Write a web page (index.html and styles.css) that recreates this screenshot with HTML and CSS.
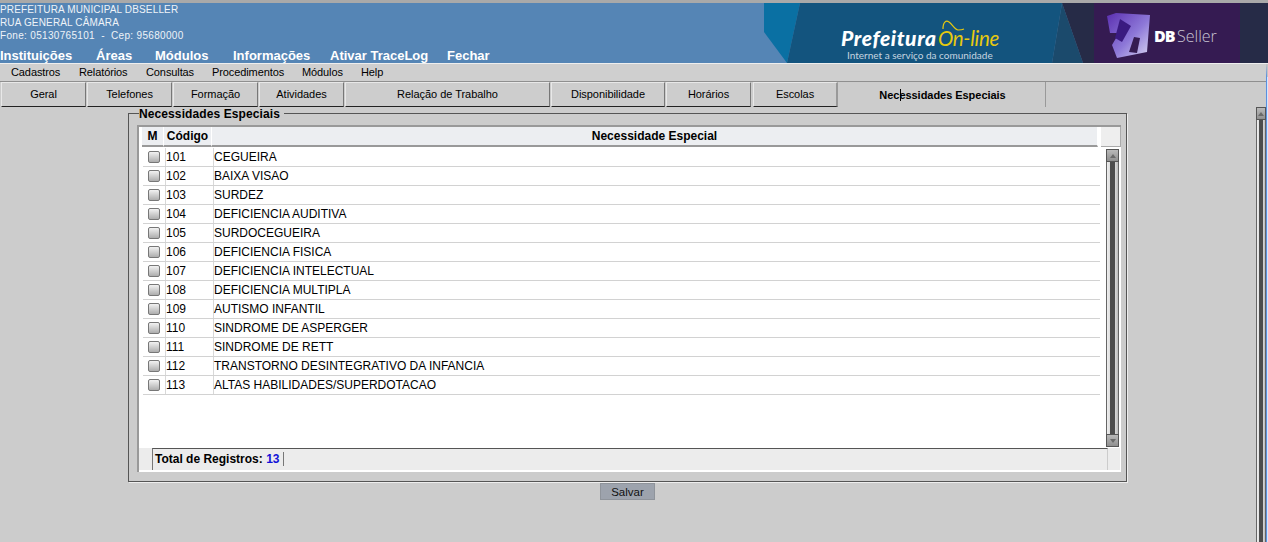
FILE: index.html
```html
<!DOCTYPE html>
<html lang="pt-BR">
<head>
  <meta charset="UTF-8" />
  <title>Necessidades Especiais</title>
  <link rel="stylesheet" href="styles.css">
</head>
<body>
  <header class="topo">
    <div class="topo-info">
      <div class="instituicao">
        <p>PREFEITURA MUNICIPAL DBSELLER</p>
        <p>RUA GENERAL CÂMARA</p>
        <p class="fone">Fone: 05130765101 &nbsp;-&nbsp; Cep: 95680000</p>
      </div>
      <nav class="nav-topo">
        <a class="n-inst">Instituições</a>
        <a class="n-area">Áreas</a>
        <a class="n-mod">Módulos</a>
        <a class="n-info">Informações</a>
        <a class="n-trace">Ativar TraceLog</a>
        <a>Fechar</a>
      </nav>
    </div>
    <svg class="banner" width="504" height="60" viewBox="764 3 504 60">
      <defs>
        <linearGradient id="marca" x1="0" y1="0" x2="1" y2="1">
          <stop offset="0" stop-color="#5b2fb0"/>
          <stop offset="0.55" stop-color="#8d78d8"/>
          <stop offset="1" stop-color="#d9d6f2"/>
        </linearGradient>
      </defs>
      <rect x="764" y="3" width="504" height="60" fill="#5585b5"/>
      <polygon points="764,3 800,3 787,63 764,32" fill="#0a70a3"/>
      <polygon points="800,3 1062,3 1052,63 787,63" fill="#13547e"/>
      <polygon points="1062,3 1083,63 1052,63" fill="#1b4a6c"/>
      <polygon points="1062,3 1268,3 1268,63 1083,63" fill="#262b47"/>
      <rect x="1094" y="3" width="146" height="60" fill="#351b52"/>
      <text x="841" y="46" class="b-pref">Prefeitura</text>
      <text x="938" y="46" class="b-online">On-line</text>
      <path d="M943 29 C943 22 946 20 949 22 C952 24 955 30 958 30 C960 30 962 30 964 29" fill="none" stroke="#e8c90f" stroke-width="1.2"/>
      <text x="847" y="58.5" class="b-sub">Internet a serviço da comunidade</text>
      <polygon points="1107,16 1116,13 1150,15 1147,52 1117,58 1112,45 1119,33 1110,33" fill="url(#marca)"/>
      <polygon points="1120,19 1131,26 1122,42 1115,38" fill="#3a1a80"/>
      <polygon points="1129,52 1134,37 1140,38 1137,53" fill="#351b52"/>
      <text x="1154" y="42" class="b-db">DB</text>
      <text x="1177" y="42" class="b-seller">Seller</text>
    </svg>
  </header>

  <nav class="menu">
    <a class="m-cad">Cadastros</a>
    <a class="m-rel">Relatórios</a>
    <a class="m-con">Consultas</a>
    <a class="m-pro">Procedimentos</a>
    <a class="m-mod">Módulos</a>
    <a>Help</a>
  </nav>

  <div class="abas">
    <a class="aba aba-85">Geral</a>
    <a class="aba aba-85">Telefones</a>
    <a class="aba aba-85">Formação</a>
    <a class="aba aba-85">Atividades</a>
    <a class="aba aba-rel">Relação de Trabalho</a>
    <a class="aba aba-disp">Disponibilidade</a>
    <a class="aba aba-85">Horários</a>
    <a class="aba aba-esc">Escolas</a>
    <a class="aba-ativa"><span class="aba-ativa-txt">Nec<i class="cursor"></i>essidades Especiais</span></a>
  </div>

  <div class="corpo">
    <main class="conteudo">
      <fieldset class="quadro">
        <legend>Necessidades Especiais</legend>
        <div class="grade">
          <div class="grade-head">
            <div class="th th-m">M</div>
            <div class="th th-cod">Código</div>
            <div class="th th-nec">Necessidade Especial</div>
            <div class="th-fim"></div>
          </div>
          <div class="grade-meio">
            <div class="linhas">
              <div class="linha"><span class="c-m"><i class="chk"></i></span><span class="c-cod">101</span><span class="c-nec">CEGUEIRA</span></div>
              <div class="linha"><span class="c-m"><i class="chk"></i></span><span class="c-cod">102</span><span class="c-nec">BAIXA VISAO</span></div>
              <div class="linha"><span class="c-m"><i class="chk"></i></span><span class="c-cod">103</span><span class="c-nec">SURDEZ</span></div>
              <div class="linha"><span class="c-m"><i class="chk"></i></span><span class="c-cod">104</span><span class="c-nec">DEFICIENCIA AUDITIVA</span></div>
              <div class="linha"><span class="c-m"><i class="chk"></i></span><span class="c-cod">105</span><span class="c-nec">SURDOCEGUEIRA</span></div>
              <div class="linha"><span class="c-m"><i class="chk"></i></span><span class="c-cod">106</span><span class="c-nec">DEFICIENCIA FISICA</span></div>
              <div class="linha"><span class="c-m"><i class="chk"></i></span><span class="c-cod">107</span><span class="c-nec">DEFICIENCIA INTELECTUAL</span></div>
              <div class="linha"><span class="c-m"><i class="chk"></i></span><span class="c-cod">108</span><span class="c-nec">DEFICIENCIA MULTIPLA</span></div>
              <div class="linha"><span class="c-m"><i class="chk"></i></span><span class="c-cod">109</span><span class="c-nec">AUTISMO INFANTIL</span></div>
              <div class="linha"><span class="c-m"><i class="chk"></i></span><span class="c-cod">110</span><span class="c-nec">SINDROME DE ASPERGER</span></div>
              <div class="linha"><span class="c-m"><i class="chk"></i></span><span class="c-cod">111</span><span class="c-nec">SINDROME DE RETT</span></div>
              <div class="linha"><span class="c-m"><i class="chk"></i></span><span class="c-cod">112</span><span class="c-nec">TRANSTORNO DESINTEGRATIVO DA INFANCIA</span></div>
              <div class="linha"><span class="c-m"><i class="chk"></i></span><span class="c-cod">113</span><span class="c-nec">ALTAS HABILIDADES/SUPERDOTACAO</span></div>
            </div>
            <div class="barra barra-grade">
              <div class="seta seta-cima"></div>
              <div class="trilho"></div>
              <div class="seta seta-baixo"></div>
            </div>
          </div>
          <div class="grade-pe">
            <div class="total">Total de Registros: <b>13</b></div>
          </div>
        </div>
      </fieldset>
      <div class="acoes">
        <button class="btn-salvar" type="button">Salvar</button>
      </div>
    </main>
    <div class="barra barra-pagina">
      <div class="seta seta-cima"></div>
      <div class="trilho"></div>
    </div>
  </div>
  <div class="borda-janela"></div>
</body>
</html>
```

FILE: styles.css
```css
* {
  box-sizing: border-box;
}
html, body {
  height: 100%;
}
body {
  margin: 0;
  overflow: hidden;
  display: flex;
  flex-direction: column;
  background: #cccccc;
  color: #000;
  font-family: "Liberation Sans", Arial, sans-serif;
  font-size: 11px;
}

/* topo */
.topo {
  display: flex;
  height: 63px;
  border-top: 3px solid #a9a9a9;
  background: #5585b5;
  flex: none;
}
.topo-info {
  flex: 1;
  display: flex;
  flex-direction: column;
  color: #fff;
}
.instituicao {
  height: 45px;
}
.instituicao p {
  margin: 0;
  height: 13px;
  line-height: 13px;
  font-size: 10px;
  letter-spacing: 0.15px;
  color: #eef3f8;
}
.instituicao .fone {
  letter-spacing: 0.32px;
}
.nav-topo {
  display: flex;
  font-size: 13px;
  font-weight: bold;
  line-height: 15px;
}
.n-inst { width: 96px; }
.n-area { width: 59px; }
.n-mod { width: 78px; }
.n-info { width: 97px; }
.n-trace { width: 117px; }
.banner {
  display: block;
  flex: none;
}
.b-pref {
  font-family: Lato, sans-serif;
  font-size: 21px;
  font-weight: 900;
  font-style: italic;
  fill: #fff;
  letter-spacing: 0.6px;
}
.b-online {
  font-family: Lato, sans-serif;
  font-size: 20.5px;
  font-weight: 400;
  font-style: italic;
  fill: #e8c90f;
  letter-spacing: -0.3px;
}
.b-sub {
  font-family: Lato, sans-serif;
  font-size: 10px;
  fill: #c6d5e0;
}
.b-db {
  font-family: "Open Sans", sans-serif;
  font-size: 16px;
  font-weight: 800;
  fill: #fff;
  letter-spacing: -1px;
}
.b-seller {
  font-family: "Open Sans", sans-serif;
  font-size: 16px;
  font-weight: 300;
  fill: #c9c6d4;
}

/* menu */
.menu {
  display: flex;
  flex: none;
  height: 19px;
  padding-left: 11px;
  align-items: center;
  background: #cfcfcf;
  border-top: 1px solid #eee;
  border-bottom: 1px solid #8f8f8f;
  line-height: 15px;
  letter-spacing: -0.1px;
}
.m-cad { width: 68px; }
.m-rel { width: 67px; }
.m-con { width: 66px; }
.m-pro { width: 90px; }
.m-mod { width: 59px; }

/* abas */
.abas {
  display: flex;
  flex: none;
  height: 26px;
  padding-left: 1px;
  gap: 1px;
  letter-spacing: -0.04px;
}
.aba {
  display: flex;
  align-items: center;
  justify-content: center;
  height: 25px;
  padding-bottom: 2px;
  background: #cdcdcd;
  border-left: 1px solid #e8e8e8;
  border-top: 1px solid #e8e8e8;
  border-right: 1px solid #777;
  border-bottom: 1px solid #222;
}
.aba-85 { width: 85px; }
.aba-rel { width: 205px; }
.aba-disp { width: 114px; }
.aba-esc { width: 85px; margin-left: 1px; margin-right: 1px; border-right: 2px solid #999; }
.aba-ativa {
  display: flex;
  align-items: center;
  justify-content: center;
  width: 206px;
  height: 25px;
  font-weight: bold;
  border-right: 1px solid #999;
}
.aba-ativa-txt {
  position: relative;
}
.cursor {
  position: absolute;
  top: 0;
  margin-left: 1px;
  width: 1px;
  height: 12px;
  background: #000;
}

/* conteudo */
.corpo {
  flex: 1;
  display: flex;
  min-height: 0;
}
.conteudo {
  flex: 1;
  padding-left: 128px;
}
.quadro {
  width: 999px;
  height: 376px;
  margin: -2px 0 0;
  padding: 4px 5px 0 8px;
  border: 1px solid #555;
  box-shadow: 1px 1px 0 #eee;
  min-width: 0;
}
legend {
  margin-left: 2px;
  padding: 2px 4px 0 0;
  font-weight: bold;
  font-size: 12px;
  letter-spacing: 0.1px;
  line-height: 13px;
}
.grade {
  height: 347px;
  display: flex;
  flex-direction: column;
  background: #fff;
  border-left: 2px solid #999;
  border-top: 2px solid #999;
}
.grade-head {
  display: flex;
  flex: none;
  height: 20px;
  padding-left: 3px;
  font-size: 12px;
  font-weight: bold;
}
.th {
  display: flex;
  align-items: center;
  justify-content: center;
  background: #eceef1;
  border-right: 1px solid #fff;
  border-bottom: 2px solid #999;
}
.th-m { width: 22px; }
.th-cod { width: 48px; }
.th-nec { width: 886px; }
.th-fim {
  width: 20px;
  margin-left: 3px;
  background: #eee;
  border-right: 1px solid #aaa;
  border-bottom: 1px solid #aaa;
}
.grade-meio {
  flex: 1;
  display: flex;
  min-height: 0;
}
.linhas {
  width: 957px;
  margin-left: 4px;
  padding-top: 1px;
}
.linha {
  display: flex;
  align-items: center;
  height: 19px;
  border-bottom: 1px solid #d2d2d2;
  font-size: 12px;
}
.c-m {
  width: 23px;
  display: flex;
  padding-left: 5px;
  border-right: 1px solid #d8d8d8;
  height: 100%;
  align-items: center;
}
.chk {
  display: block;
  width: 12px;
  height: 12px;
  border: 1px solid #777;
  border-radius: 2px;
  background: linear-gradient(#f2f2f2, #adadad);
}
.c-cod {
  width: 48px;
  height: 100%;
  line-height: 18px;
  border-right: 1px solid #d8d8d8;
}
.c-nec {
  line-height: 18px;
}

/* barras de rolagem */
.barra {
  display: flex;
  flex-direction: column;
  align-items: center;
  flex: none;
}
.barra-grade {
  width: 13px;
  margin-left: 6px;
  height: 298px;
  margin-top: 2px;
}
.barra-pagina {
  width: 12px;
  padding-right: 2px;
  margin-top: -1px;
}
.seta {
  flex: none;
  width: 100%;
  height: 13px;
  border: 1px solid #555;
  background: linear-gradient(#b9b9b9, #8f8f8f);
  display: flex;
  align-items: center;
  justify-content: center;
}
.seta::after {
  content: "";
  width: 0;
  height: 0;
  border-left: 3px solid transparent;
  border-right: 3px solid transparent;
}
.seta-cima::after { border-bottom: 4px solid #6a6a6a; }
.seta-baixo::after { border-top: 4px solid #6a6a6a; }
.trilho {
  flex: 1;
  width: 100%;
  border: 1px solid #666;
  border-top: 0;
  border-bottom: 0;
  background: linear-gradient(90deg, #eee 0, #ddd 30%, #4d4d4d 30%, #4d4d4d 70%, #ddd 70%, #bbb 100%);
}
.borda-janela {
  position: absolute;
  top: 64px;
  right: 0;
  bottom: 0;
  width: 2px;
  border-top: 13px solid #c4c4c4;
  border-left: 1px solid #5b8fe0;
  background: #d5e6fb;
}

/* rodape da grade */
.grade-pe {
  flex: none;
  height: 22px;
  margin: 0 1px 2px 0;
  padding-left: 13px;
  background: #ececec;
}
.total {
  height: 22px;
  width: 956px;
  padding-left: 2px;
  border-left: 1px solid #777;
  border-right: 1px solid #ccc;
  border-top: 1px solid #555;
  line-height: 21px;
  font-size: 12px;
  font-weight: bold;
}
.total b {
  color: #1212d8;
  padding-right: 4px;
  border-right: 1px solid #777;
}

.acoes {
  display: flex;
  width: 999px;
  justify-content: center;
  margin-top: 1px;
}
.btn-salvar {
  width: 55px;
  height: 17px;
  padding: 0;
  border: 1px solid #8f949b;
  background: #9da3ad;
  color: #111;
  font-family: inherit;
  font-size: 11.5px;
  border-radius: 0;
}
```
